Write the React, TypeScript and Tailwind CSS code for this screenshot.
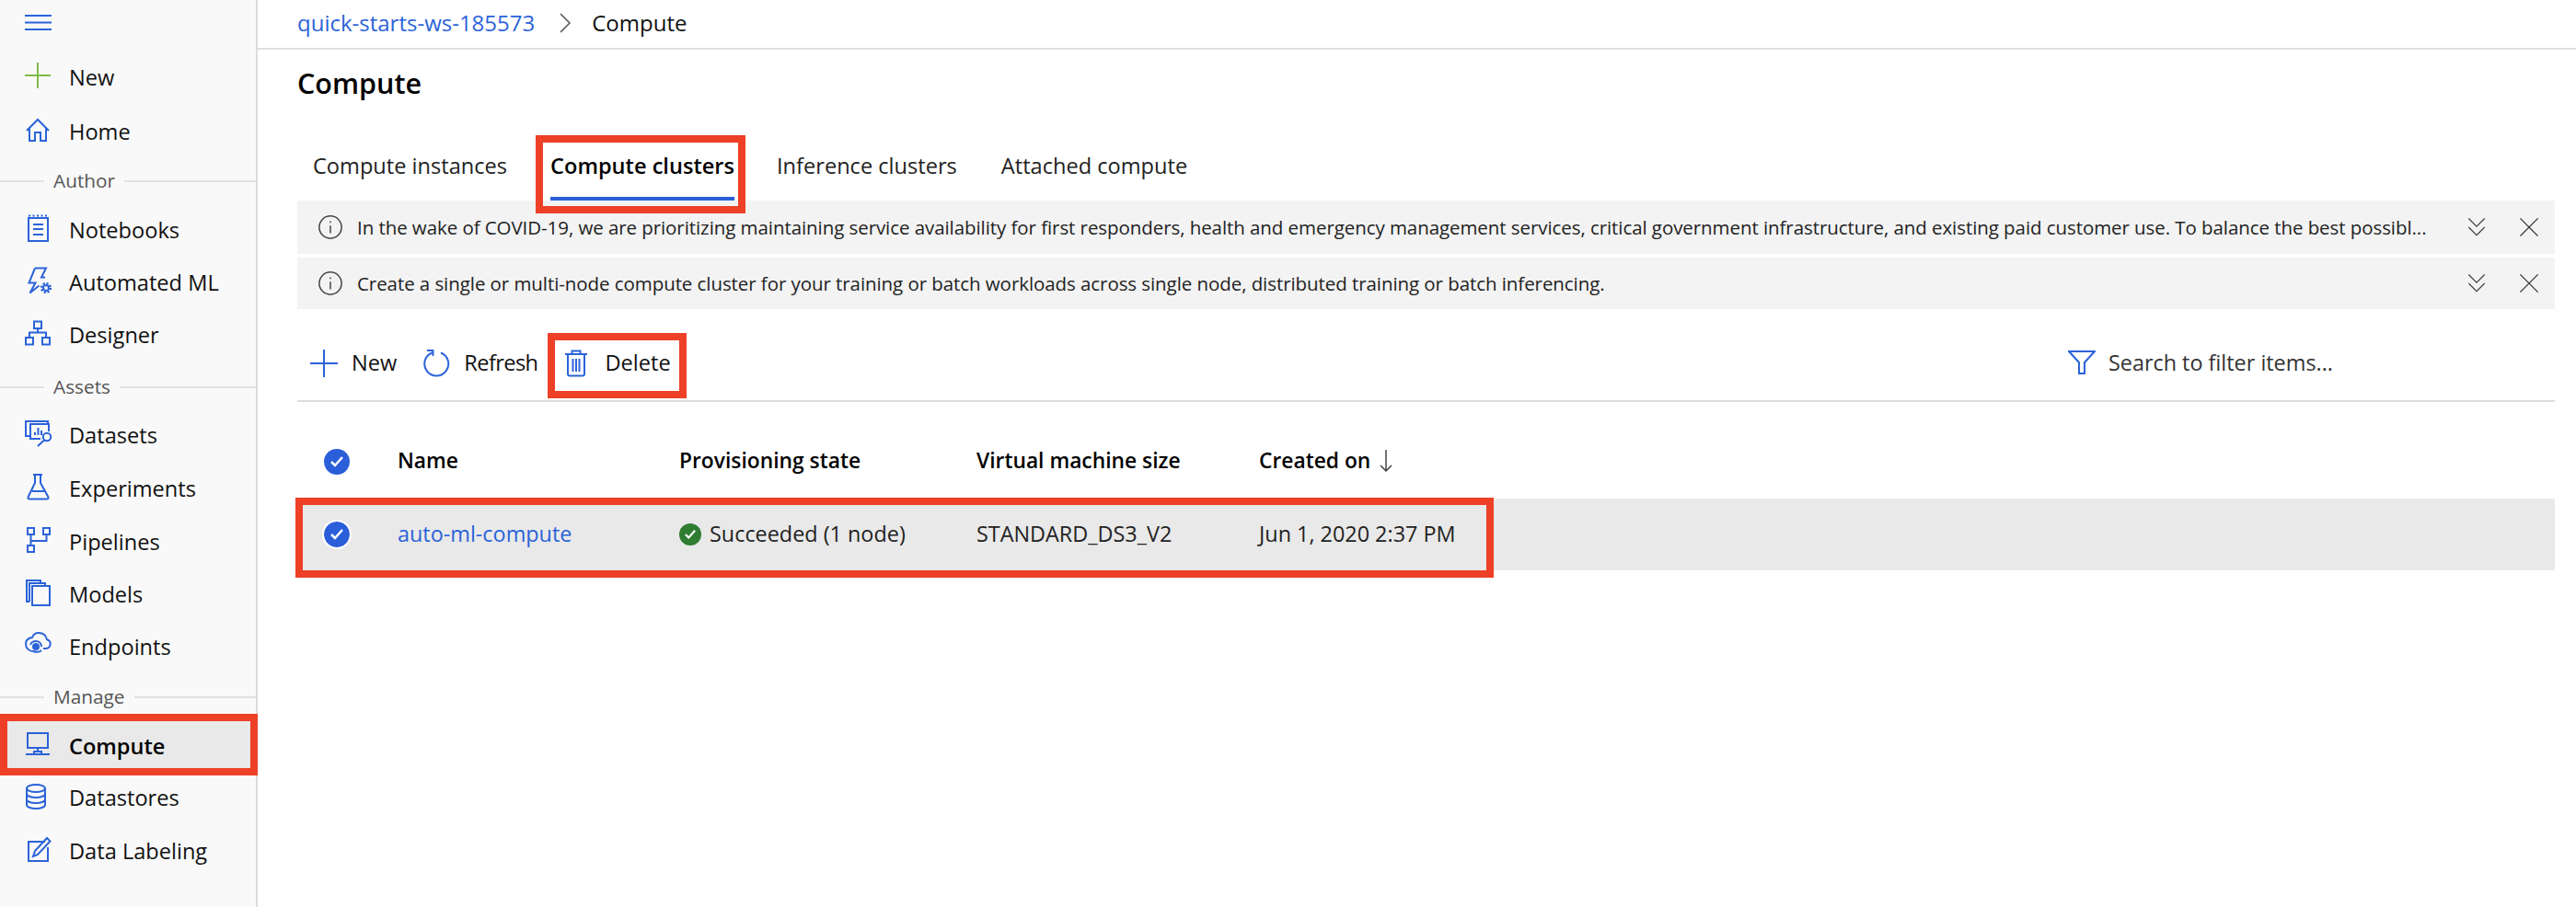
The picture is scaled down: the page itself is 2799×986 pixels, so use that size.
import React from 'react';

const BLUE = '#2b63d9';

const Svg = ({ children, size = 30, color = BLUE, width = 2 }: { children: React.ReactNode; size?: number; color?: string; width?: number }) => (
  <svg width={size} height={size} viewBox="0 0 30 30" fill="none" stroke={color} strokeWidth={width} className="shrink-0">
    {children}
  </svg>
);

const icons: Record<string, React.ReactNode> = {
  new: <path d="M1 15h28M15 1v28" stroke="#7fba4a" />,
  home: <path d="M3 16 15 4l12 12M6 13v14h6v-9h6v9h6V13" />,
  notebooks: (
    <>
      <rect x="5" y="4" width="21" height="25" />
      <path d="M5 1.5h21" strokeDasharray="2 2.5" />
      <path d="M10 11h11M10 16h11M10 22h11" />
    </>
  ),
  automl: (
    <>
      <path d="M12 1.500h12l-5 10h4M12 1.500 5.500 17.500h7L6.500 28.500l10-8" />
      <circle cx="24" cy="23" r="3" />
      <circle cx="24" cy="23" r="5" strokeDasharray="2.200 1.700" strokeWidth="2.200" />
    </>
  ),
  designer: (
    <>
      <rect x="11" y="2.500" width="8" height="7.500" />
      <rect x="2" y="20" width="8" height="7.500" />
      <rect x="20" y="20" width="8" height="7.500" />
      <path d="M15 10v4.500M6 20v-5.500h18V20" />
    </>
  ),
  datasets: (
    <>
      <path d="M7 18H2V2h24v3" />
      <path d="M18 21H7V5h20v8" />
      <path d="M12 17v-3M15.500 17V9M19 17v-5" />
      <circle cx="25" cy="19" r="4.200" />
      <path d="M22 22.500 15 29" />
    </>
  ),
  experiments: <path d="M10 2h10M12 2v9L4.5 26.5a1.5 1.5 0 0 0 1.5 2h19a1.5 1.5 0 0 0 1.5-2L18 11V2M9 20h13" />,
  pipelines: (
    <>
      <rect x="4" y="2" width="7" height="7" />
      <rect x="21" y="2" width="7" height="7" />
      <rect x="4" y="21" width="7" height="7" />
      <path d="M7.5 9v12M7.500 16h17V9" />
    </>
  ),
  models: (
    <>
      <rect x="9" y="8" width="19" height="21" />
      <path d="M6 25H3V2h15v3M6 25V5h17v3" />
    </>
  ),
  endpoints: (
    <>
      <path d="M21 19h3a5 5 0 0 0 1-9.800C24 5 21 2 16 2c-3 0-6 2-7 5-4 .5-7 3-7 7 0 5 4 8 8 8 3 1 7 1 9-1" />
      <path d="M7 15c1-3 4-4 6-4 3 0 6 2 6 6" />
      <circle cx="13" cy="17" r="3" fill={BLUE} />
    </>
  ),
  compute: (
    <>
      <rect x="4" y="3" width="22" height="16" />
      <path d="M15 19v4M2 26h26" />
      <path d="M11 26v-3h8v3" />
    </>
  ),
  datastores: (
    <>
      <ellipse cx="13" cy="7" rx="10" ry="4" />
      <path d="M3 7v18c0 2 4 4 10 4s10-2 10-4V7M3 13c0 2 4 4 10 4s10-2 10-4M3 19c0 2 4 4 10 4s10-2 10-4" />
    </>
  ),
  labeling: (
    <>
      <path d="M23 7H5v21h21V13" />
      <path d="M10 23l2-6L25 3l3.500 3.500L15 21z" />
    </>
  ),
};

const NavItem = ({ icon, label, h, active }: { icon: string; label: string; h: string; active?: boolean }) => (
  <div className={`relative flex items-center pl-[26px] ${h} ${active ? 'bg-[#e9e9e9] font-semibold text-black' : 'text-[#111]'}`}>
    <div className="mb-[6px]">
      <Svg>{icons[icon]}</Svg>
    </div>
    <span className="ml-[19px] text-[23.6px]">{label}</span>
    {active && <div className="absolute left-0 top-[-8px] h-[67px] w-[280px] border-[8px] border-[#ee4027]" />}
  </div>
);

const SectionLabel = ({ label, h }: { label: string; h: string }) => (
  <div className={`flex items-center ${h}`}>
    <div className="h-[2px] w-[48px] bg-[#e1e1e1]" />
    <span className="mx-[10px] text-[20.8px] text-[#555]">{label}</span>
    <div className="h-[2px] flex-1 bg-[#e1e1e1]" />
  </div>
);

const Sidebar = () => (
  <div className="flex h-[986px] w-[280px] shrink-0 flex-col border-r-2 border-[#dcdcdc] bg-[#f9f9f9]">
    <div className="h-[56px] pl-[27px] pt-[16px]">
      <svg width="30" height="18" viewBox="0 0 30 18" fill="none" stroke={BLUE} strokeWidth="2">
        <path d="M0 1h29M0 8.500h29M0 16h29" />
      </svg>
    </div>
    <NavItem icon="new" label="New" h="h-[58px]" />
    <NavItem icon="home" label="Home" h="h-[59px]" />
    <SectionLabel label="Author" h="h-[48px]" />
    <NavItem icon="notebooks" label="Notebooks" h="h-[59px]" />
    <NavItem icon="automl" label="Automated ML" h="h-[55px]" />
    <NavItem icon="designer" label="Designer" h="h-[60px]" />
    <SectionLabel label="Assets" h="h-[51px]" />
    <NavItem icon="datasets" label="Datasets" h="h-[56px]" />
    <NavItem icon="experiments" label="Experiments" h="h-[59px]" />
    <NavItem icon="pipelines" label="Pipelines" h="h-[57px]" />
    <NavItem icon="models" label="Models" h="h-[58px]" />
    <NavItem icon="endpoints" label="Endpoints" h="h-[55px]" />
    <SectionLabel label="Manage" h="h-[53px]" />
    <NavItem icon="compute" label="Compute" h="h-[56px]" active />
    <NavItem icon="datastores" label="Datastores" h="h-[56px]" />
    <NavItem icon="labeling" label="Data Labeling" h="h-[60px]" />
  </div>
);

const Banner = ({ text, h, className }: { text: string; h: string; className?: string }) => (
  <div className={`flex items-center bg-[#f3f3f3] pl-[22px] ${h} ${className ?? ''}`}>
    <Svg size={28} color="#444" width={1.600}>
      <circle cx="15" cy="15" r="13" />
      <path d="M15 13v9M15 8v2" />
    </Svg>
    <span className="ml-[15px] flex-1 whitespace-nowrap text-[20.5px] tracking-[-0.07px] text-[#222]">{text}</span>
    <Svg size={26} color="#444" width={1.500}>
      <path d="M5 4l10 10L25 4M5 15l10 10 10-10" />
    </Svg>
    <div className="ml-[32px] mr-[16px]">
      <Svg size={24} color="#333" width={1.600}>
        <path d="M3 3l24 24M27 3 3 27" />
      </Svg>
    </div>
  </div>
);

const CheckCircle = ({ ring }: { ring?: boolean }) => (
  <div className={`flex h-[28px] w-[28px] items-center justify-center rounded-full bg-[#2b5fd9] ${ring ? 'outline-2 outline-white' : ''}`}>
    <svg width="16" height="14" viewBox="0 0 16 14" fill="none" stroke="white" strokeWidth="2.500">
      <path d="M2 7l4 4 8-9" />
    </svg>
  </div>
);

const Tab = ({ label, active, className }: { label: string; active?: boolean; className?: string }) => (
  <div className={`relative h-[71px] border-b-4 pt-[16px] text-[23.6px] leading-[35px] ${active ? 'border-[#2b5fd9] font-semibold text-black' : 'border-transparent text-[#222]'} ${className ?? ''}`}>
    {label}
    {active && <div className="absolute left-[-16px] top-0 h-[85px] w-[228px] border-[8px] border-[#ee4027]" />}
  </div>
);

const App = () => (
  <div className="flex h-[986px] w-[2799px] overflow-hidden bg-white font-['Open_Sans',sans-serif] text-[#111]">
    <Sidebar />
    <div className="flex-1 pr-[23px]">
      <div className="-mr-[23px] flex h-[54px] items-center border-b-2 border-[#dfdfdf] pb-[2px] pl-[43px] text-[24px]">
        <span className="text-[#2b63d9]">quick-starts-ws-185573</span>
        <svg width="14" height="22" viewBox="0 0 14 22" fill="none" stroke="#555" strokeWidth="1.500" className="ml-[26px] mr-[22px]">
          <path d="M2 1l10 10L2 21" />
        </svg>
        <span>Compute</span>
      </div>
      <div className="flex h-[74px] items-center pl-[43px] text-[30.5px] font-semibold text-black">Compute</div>
      <div className="ml-[43px]">
        <div className="flex h-[90px] items-end gap-[46px] pl-[17px]">
          <Tab label="Compute instances" className="mr-[1px]" />
          <Tab label="Compute clusters" active />
          <Tab label="Inference clusters" />
          <Tab label="Attached compute" className="ml-[2px]" />
        </div>
        <Banner
          h="h-[58px]"
          text="In the wake of COVID-19, we are prioritizing maintaining service availability for first responders, health and emergency management services, critical government infrastructure, and existing paid customer use. To balance the best possibl..."
        />
        <Banner
          h="h-[56px]"
          className="mt-[4px]"
          text="Create a single or multi-node compute cluster for your training or batch workloads across single node, distributed training or batch inferencing."
        />
        <div className="flex h-[101px] items-center border-b-2 border-[#dcdcdc] pt-[18px] pl-[14px] text-[23.6px]">
          <Svg>
            <path d="M0 15h30M15 0v30" />
          </Svg>
          <span className="ml-[15px]">New</span>
          <div className="ml-[29px]">
            <Svg>
              <path d="M19 3.500A13 13 0 1 1 9.500 3.500M4 1h6.500v6" />
            </Svg>
          </div>
          <span className="ml-[14px] tracking-[-0.6px]">Refresh</span>
          <div className="relative ml-[11px] mt-[6px] flex h-[71px] w-[151px] items-center pb-[6px] pl-[16px]">
            <Svg>
              <path d="M6 5v21.500a2 2 0 0 0 2 2h14a2 2 0 0 0 2-2V5M3 5h24M10.500 5V1.500h9V5M11.500 10v14M15 10v14M18.500 10v14" />
            </Svg>
            <span className="ml-[16px]">Delete</span>
            <div className="absolute inset-0 border-[8px] border-[#ee4027]" />
          </div>
          <div className="ml-auto mr-[241px] flex items-center">
            <Svg>
              <path d="M1 3h28L18 15v12h-6V15z" />
            </Svg>
            <span className="ml-[14px] text-[23.4px] text-[#333]">Search to filter items...</span>
          </div>
        </div>
        <div className="flex h-[105px] items-center pt-[25px] text-[22.8px] font-semibold text-black">
          <div className="w-[109px] pl-[29px]">
            <CheckCircle />
          </div>
          <div className="-mt-[2px] w-[306px]">Name</div>
          <div className="-mt-[2px] w-[323px]">Provisioning state</div>
          <div className="-mt-[2px] w-[307px]">Virtual machine size</div>
          <div className="-mt-[2px] flex items-center">
            Created on
            <svg width="14" height="26" viewBox="0 0 14 26" fill="none" stroke="#444" strokeWidth="1.500" className="ml-[10px]">
              <path d="M7 1v23M1 18l6 6 6-6" />
            </svg>
          </div>
        </div>
        <div className="relative flex h-[78px] items-center bg-[#e9e9e9] text-[23.4px] text-[#222]">
          <div className="w-[109px] pl-[29px]">
            <CheckCircle ring />
          </div>
          <div className="w-[306px] text-[#2b63d9]">auto-ml-compute</div>
          <div className="flex w-[323px] items-center">
            <div className="flex h-[24px] w-[24px] items-center justify-center rounded-full bg-[#2f7d32]">
              <svg width="14" height="12" viewBox="0 0 16 14" fill="none" stroke="white" strokeWidth="2.500">
                <path d="M2 7l4 4 8-9" />
              </svg>
            </div>
            <span className="ml-[9px]">Succeeded (1 node)</span>
          </div>
          <div className="w-[307px]">STANDARD_DS3_V2</div>
          <div>Jun 1, 2020 2:37 PM</div>
          <div className="absolute left-[-2px] top-[-1px] h-[87px] w-[1302px] border-[8px] border-[#ee4027]" />
        </div>
      </div>
    </div>
  </div>
);

export default App;
